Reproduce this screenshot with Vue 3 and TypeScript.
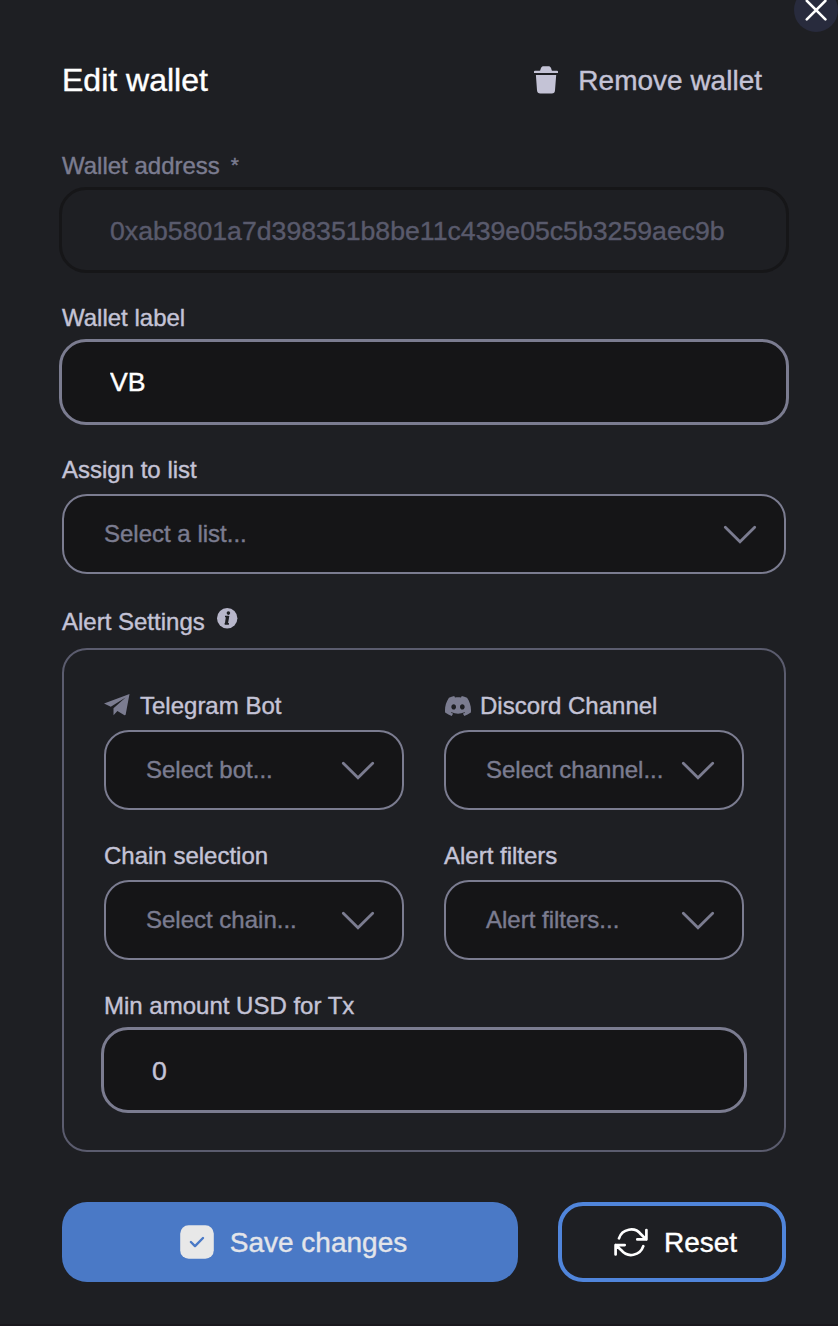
<script setup lang="ts">
import { ref } from 'vue'

interface SelectField {
  label: string
  placeholder: string
  icon?: 'telegram' | 'discord'
}

const address = ref('0xab5801a7d398351b8be11c439e05c5b3259aec9b')
const walletLabel = ref('VB')
const minAmount = ref('0')

const alertFields: SelectField[] = [
  { label: 'Telegram Bot', placeholder: 'Select bot...', icon: 'telegram' },
  { label: 'Discord Channel', placeholder: 'Select channel...', icon: 'discord' },
  { label: 'Chain selection', placeholder: 'Select chain...' },
  { label: 'Alert filters', placeholder: 'Alert filters...' },
]
</script>

<template>
  <main class="dialog">
    <button class="close" aria-label="Close">
      <svg width="44" height="44" viewBox="0 0 44 44">
        <path d="M12.8 12.8 31.4 31.4M31.4 12.8 12.8 31.4" fill="none" stroke="#fff" stroke-width="2.6" stroke-linecap="round" />
      </svg>
    </button>

    <header class="head">
      <h1>Edit wallet</h1>
      <button class="remove">
        <svg width="24" height="28" viewBox="0 0 24 28" fill="currentColor">
          <path d="M0 5.4Q0 4.700 1 4.700H5.7C6.6 4.700 6.3 3.4 7 2 7.6.7 8.3.2 9.5.2H14.5C15.7.2 16.4.7 17 2 17.7 3.4 17.4 4.700 18.3 4.700H23Q24 4.700 24 5.4V7.100H0Z" />
          <path d="M1.900 9.100H22.2L21 24.2Q20.8 27.4 17.8 27.4H6.3Q3.3 27.4 3 24.2Z" />
        </svg>
        <span>Remove wallet</span>
      </button>
    </header>

    <div class="field">
      <label class="label muted">Wallet address<span class="star">*</span></label>
      <input v-model="address" class="input" disabled />
    </div>

    <div class="field">
      <label class="label">Wallet label</label>
      <input v-model="walletLabel" class="input strong" />
    </div>

    <div class="field">
      <label class="label">Assign to list</label>
      <button class="select">
        <span>Select a list...</span>
        <svg class="chevron" width="34" height="20" viewBox="0 0 34 20"><path d="M2.3 2.3 17 16.8 31.7 2.3" /></svg>
      </button>
    </div>

    <div class="label">
      <span>Alert Settings</span>
      <svg class="info" width="21" height="21" viewBox="0 0 21 21">
        <circle cx="10.2" cy="10.2" r="10.2" fill="#b7b6ca" />
        <circle cx="11.4" cy="5.1" r="1.8" fill="#1e1f23" />
        <path d="M8 8.5H10.800L9.500 15.8H11.9M7.700 15.8H10" fill="none" stroke="#1e1f23" stroke-width="1.7" />
        <path d="M9 8H12.3L10.9 16H7.800Z" fill="#1e1f23" />
      </svg>
    </div>

    <section class="panel">
      <div v-for="f in alertFields" :key="f.label" class="cell">
        <label class="label">
          <svg v-if="f.icon === 'telegram'" class="telegram" width="26" height="22" viewBox="0 0 26 22" fill="#7b7c90">
            <path d="M25.5.1 0 9.4 6.8 12.7 21.600 3.600 9.5 14.3V21.3L13.4 17.1 20.5 21.3Q21.4 21.5 21.7 20.6Z" />
          </svg>
          <svg v-else-if="f.icon === 'discord'" class="discord" width="26" height="20" viewBox="0 2.8 24 18.4" fill="#7b7c90">
            <path d="M20.317 4.3698a19.7913 19.7913 0 00-4.8851-1.5152.0741.0741 0 00-.0785.0371c-.211.3753-.4447.8648-.6083 1.2495-1.8447-.2762-3.68-.2762-5.4868 0-.1636-.3933-.4058-.8742-.6177-1.2495a.077.077 0 00-.0785-.037 19.7363 19.7363 0 00-4.8852 1.515.0699.0699 0 00-.0321.0277C.5334 9.0458-.319 13.5799.0992 18.0578a.0824.0824 0 00.0312.0561c2.0528 1.5076 4.0413 2.4228 5.9929 3.0294a.0777.0777 0 00.0842-.0276c.4616-.6304.8731-1.2952 1.226-1.9942a.076.076 0 00-.0416-.1057c-.6528-.2476-1.2743-.5495-1.8722-.8923a.077.077 0 01-.0076-.1277c.1258-.0943.2517-.1923.3718-.2914a.0743.0743 0 01.0776-.0105c3.9278 1.7933 8.18 1.7933 12.0614 0a.0739.0739 0 01.0785.0095c.1202.099.246.1981.3728.2924a.077.077 0 01-.0066.1276 12.2986 12.2986 0 01-1.873.8914.0766.0766 0 00-.0407.1067c.3604.698.7719 1.3628 1.225 1.9932a.076.076 0 00.0842.0286c1.961-.6067 3.9495-1.5219 6.0023-3.0294a.077.077 0 00.0313-.0552c.5004-5.177-.8382-9.6739-3.5485-13.6604a.061.061 0 00-.0312-.0286zM8.02 15.3312c-1.1825 0-2.1569-1.0857-2.1569-2.419 0-1.3332.9555-2.4189 2.157-2.4189 1.2108 0 2.1757 1.0952 2.1568 2.419 0 1.3332-.9555 2.4189-2.1569 2.4189zm7.9748 0c-1.1825 0-2.1569-1.0857-2.1569-2.419 0-1.3332.9554-2.4189 2.1569-2.4189 1.2108 0 2.1757 1.0952 2.1568 2.419 0 1.3332-.946 2.4189-2.1568 2.4189Z" />
          </svg>
          <span>{{ f.label }}</span>
        </label>
        <button class="select">
          <span>{{ f.placeholder }}</span>
          <svg class="chevron" width="34" height="20" viewBox="0 0 34 20"><path d="M2.3 2.3 17 16.8 31.7 2.3" /></svg>
        </button>
      </div>
      <div class="cell wide">
        <label class="label">Min amount USD for Tx</label>
        <input v-model="minAmount" class="input" />
      </div>
    </section>

    <footer class="actions">
      <button class="save">
        <svg width="34" height="34" viewBox="0 0 34 34">
          <rect x=".2" y=".2" width="33.6" height="33.6" rx="8.5" fill="#e8e8e8" />
          <path d="M10.900 17 15 21.1 23 13" fill="none" stroke="#4a79c6" stroke-width="2.4" stroke-linecap="round" stroke-linejoin="round" />
        </svg>
        <span>Save changes</span>
      </button>
      <button class="reset">
        <svg width="34" height="30" viewBox="0 0 34 30" fill="none" stroke="#fff" stroke-width="2.7" stroke-linecap="round" stroke-linejoin="round">
          <path d="M5 11.3A12.7 12.7 0 0 1 27 7.3L32.3 12.5M32.4 3V12.4H23.3" />
          <path d="M29.3 19.2A12.7 12.7 0 0 1 7.3 23.2L1.7 18M1.6 27.5V18.100H10.7" />
        </svg>
        <span>Reset</span>
      </button>
    </footer>
  </main>
</template>

<style>
body {
  background: #1e1f23;
}
</style>

<style scoped>
.dialog {
  position: relative;
  box-sizing: border-box;
  width: 838px;
  height: 1326px;
  padding: 60px 52px 0 62px;
  overflow: hidden;
  background: #1e1f23;
  border-bottom: 2px solid #1a181d;
  font-family: 'Liberation Sans', Arial, sans-serif;
  color: #c4c3d6;
  -webkit-text-stroke: 0.4px currentColor;
}
button,
input {
  box-sizing: border-box;
  margin: 0;
  border: 0;
  background: none;
  font-family: inherit;
  color: inherit;
  outline: none;
  -webkit-text-stroke: inherit;
}
svg {
  display: block;
  flex: none;
}
.close {
  position: absolute;
  top: -12px;
  right: 0;
  width: 44px;
  height: 44px;
  padding: 0;
  border-radius: 50%;
  background: #282b3d;
}
.head {
  display: flex;
  justify-content: space-between;
  align-items: center;
  height: 40px;
  padding-right: 24px;
  margin-bottom: 52px;
}
h1 {
  margin: 0;
  font-size: 32px;
  line-height: 36px;
  font-weight: 400;
  color: #fff;
}
.remove {
  display: flex;
  align-items: center;
  gap: 20px;
  padding: 0;
  font-size: 28px;
  line-height: 32px;
}
.remove span,
.save span,
.reset span {
  padding-top: 2px;
}
.field {
  width: 724px;
  margin-bottom: 34px;
}
.label {
  display: flex;
  align-items: center;
  height: 28px;
  font-size: 24px;
  line-height: 28px;
  white-space: nowrap;
}
.muted {
  color: #7b7c90;
}
.star {
  margin-left: 11px;
  font-size: 21px;
  line-height: 24px;
  padding-bottom: 3px;
}
.input {
  display: block;
  width: calc(100% + 6px);
  height: 86px;
  margin: 7px -3px -3px;
  padding: 2px 47px 0 48px;
  border: 3px solid #7b7c90;
  border-radius: 27px;
  background: #151517;
  font-size: 26.667px;
}
.input.strong {
  padding-top: 0;
  color: #fff;
}
.input:disabled {
  background: transparent;
  border-color: #161618;
  color: #595a6c;
}
.select {
  display: flex;
  align-items: center;
  justify-content: space-between;
  width: 100%;
  height: 80px;
  margin-top: 10px;
  padding: 0 27px 0 40px;
  border: 2px solid #7b7c90;
  border-radius: 25px;
  background: #151517;
  font-size: 24px;
  line-height: 28px;
  color: #7b7c90;
  white-space: nowrap;
}
.chevron {
  margin-top: 2px;
}
.chevron path {
  fill: none;
  stroke: #7b7c90;
  stroke-width: 2.8;
  stroke-linecap: round;
}
.info {
  margin: -8px 0 0 12px;
}
.telegram {
  margin: -2px 10px 0 0;
}
.discord {
  margin: 0 9px 0 1px;
}
.panel {
  box-sizing: border-box;
  display: grid;
  grid-template-columns: 300px 300px;
  gap: 32px 40px;
  width: 724px;
  height: 504px;
  margin-top: 12px;
  padding: 42px 40px 40px;
  border: 2px solid #5b5c6e;
  border-radius: 25px;
}
.cell {
  height: 118px;
}
.wide {
  grid-column: span 2;
}
.actions {
  display: flex;
  gap: 40px;
  margin-top: 50px;
}
.save,
.reset {
  display: flex;
  align-items: center;
  justify-content: center;
  gap: 16px;
  height: 80px;
  border-radius: 25px;
  padding: 0 0 0 7px;
  font-size: 28px;
  line-height: 32px;
}
.save {
  width: 456px;
  background: #4a79c6;
  color: #e3e5ea;
}
.reset {
  width: 228px;
  border: 4px solid #5085db;
  color: #fff;
}
</style>
